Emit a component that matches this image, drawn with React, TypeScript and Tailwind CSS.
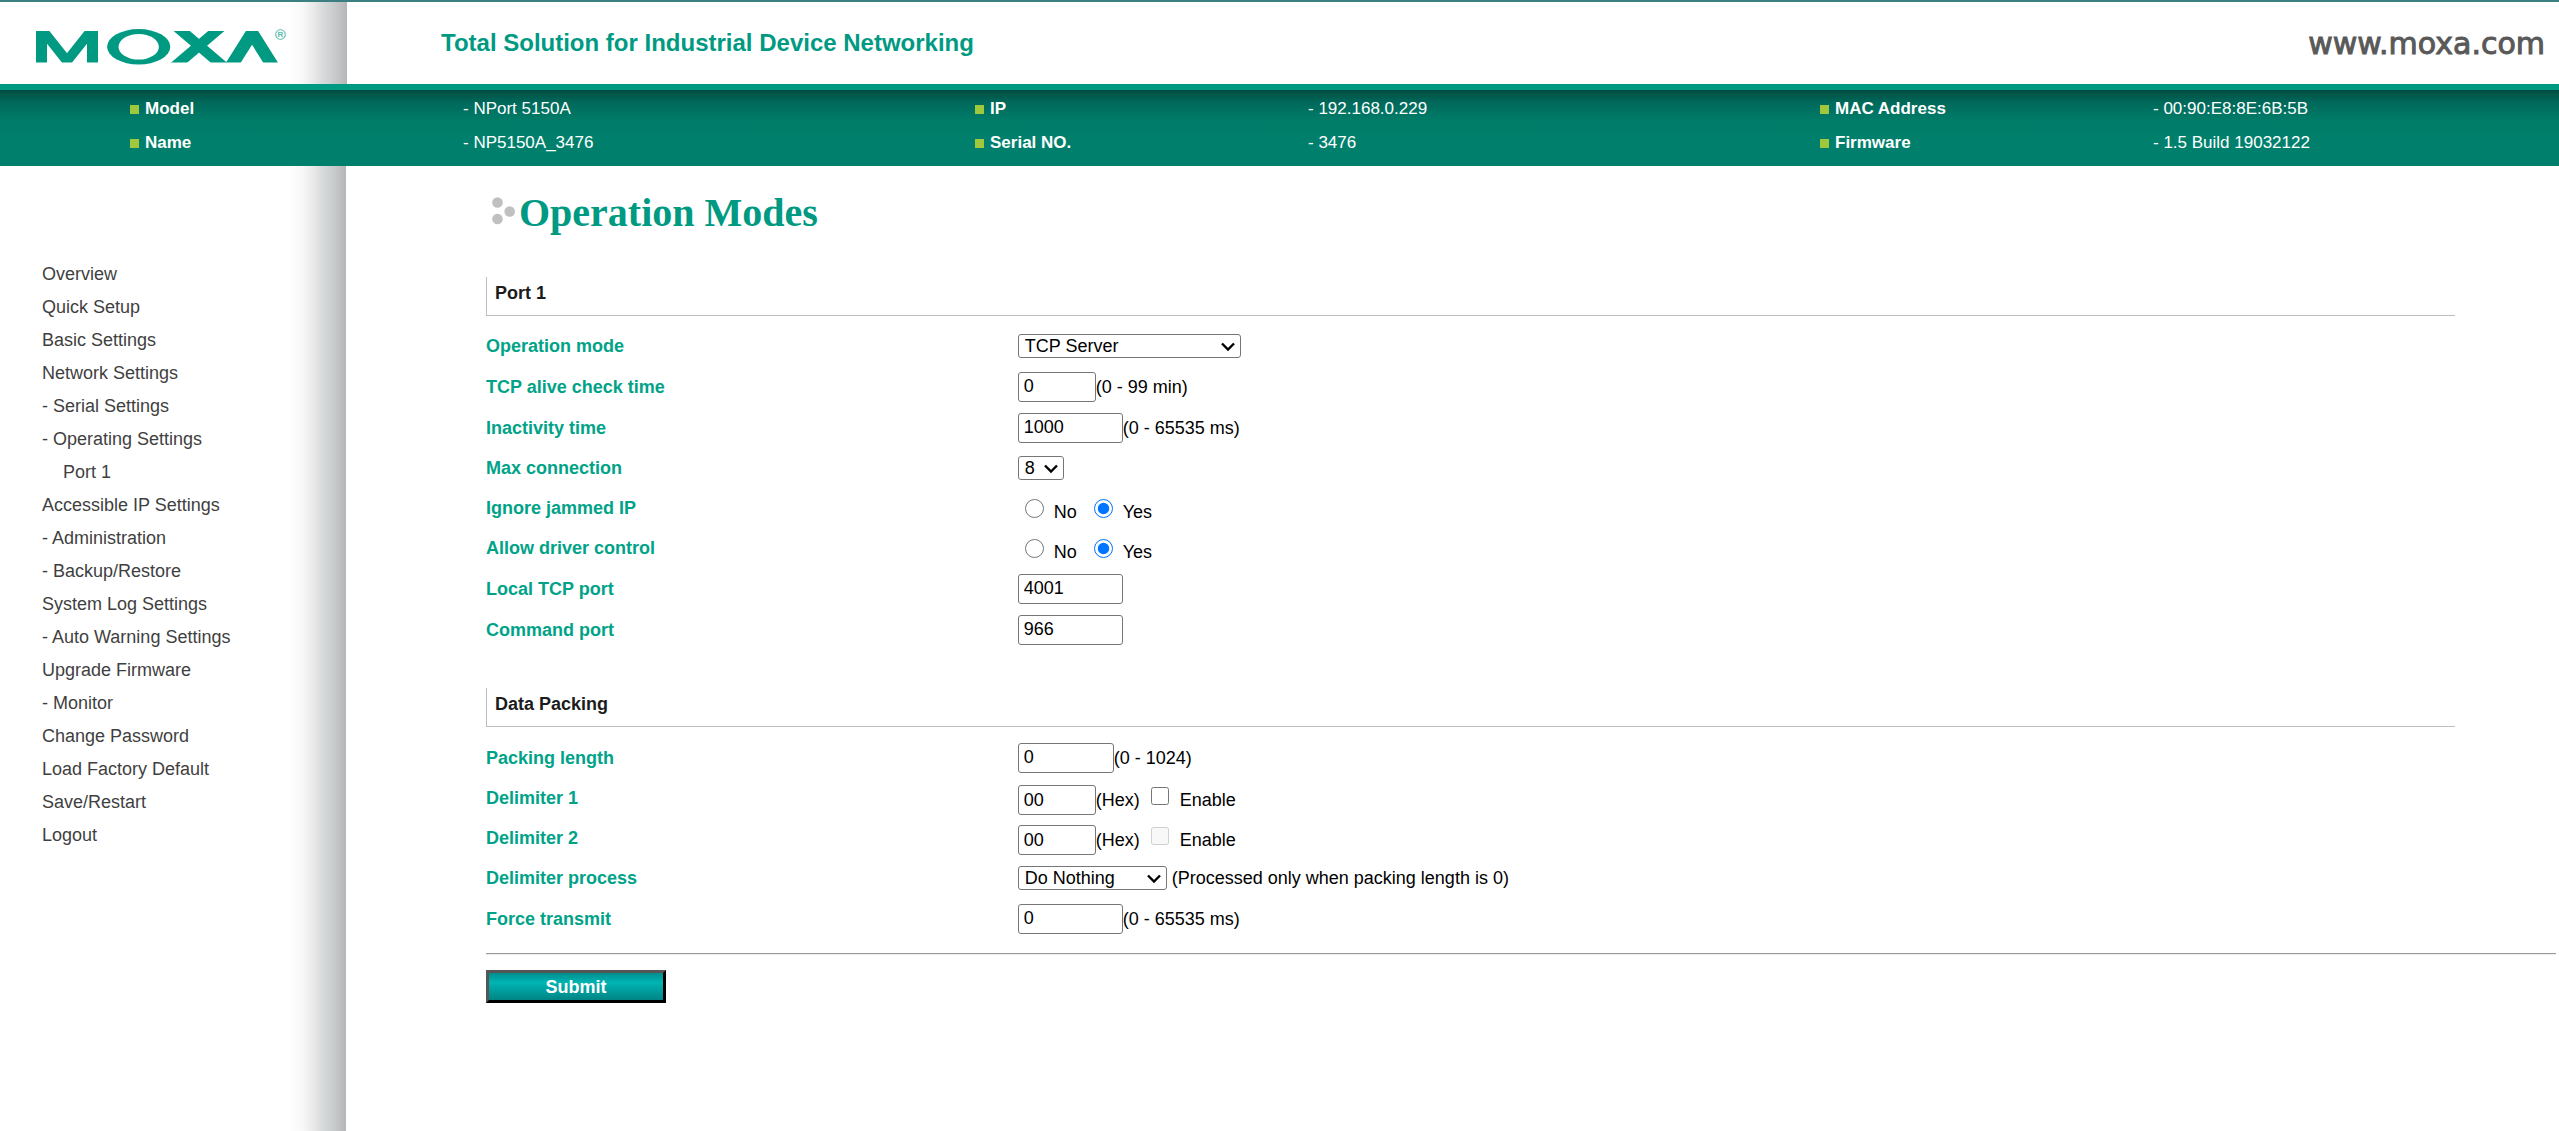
import React, { useId, useState } from "react";

const device = [
  ["Model", "NPort 5150A"],
  ["IP", "192.168.0.229"],
  ["MAC Address", "00:90:E8:8E:6B:5B"],
  ["Name", "NP5150A_3476"],
  ["Serial NO.", "3476"],
  ["Firmware", "1.5 Build 19032122"],
];

const menu = [
  "Overview",
  "Quick Setup",
  "Basic Settings",
  "Network Settings",
  "- Serial Settings",
  "- Operating Settings",
  "Port 1",
  "Accessible IP Settings",
  "- Administration",
  "- Backup/Restore",
  "System Log Settings",
  "- Auto Warning Settings",
  "Upgrade Firmware",
  "- Monitor",
  "Change Password",
  "Load Factory Default",
  "Save/Restart",
  "Logout",
];

const shade =
  "bg-[linear-gradient(to_right,#ffffff,#f8f8f8_25%,#e8e8e8_45%,#d9dcde_57%,#ccced0_75%,#b4b6b8)]";

function Logo() {
  return (
    <svg role="img" aria-label="MOXA" className="ml-9 h-9 w-[252px] shrink-0" viewBox="36 29 252 36">
      <defs>
        <clipPath id="band">
          <rect x="36" y="31" width="250" height="31.5" />
        </clipPath>
      </defs>
      <g clipPath="url(#band)" fill="none" stroke="#009a83" strokeMiterlimit="10">
        <path d="M41.5 66V28M92.5 66V28" strokeWidth="11" />
        <path d="M40 27L67 61L94 27" strokeWidth="9.8" />
        <path d="M177 27L224 67M221 27L174 67" strokeWidth="10.5" />
        <path d="M230 68L252 33L274 68" strokeWidth="12.5" />
      </g>
      <ellipse cx="138.7" cy="46.8" rx="31.6" ry="17.7" fill="#009a83" />
      <ellipse cx="138.7" cy="46.8" rx="20.2" ry="12.8" fill="#ffffff" />
      <circle cx="280.5" cy="34.5" r="4.8" fill="none" stroke="#7cc9bd" strokeWidth="1.3" />
      <text x="280.5" y="37.3" textAnchor="middle" fontSize="8" fontWeight="bold" fontFamily="Liberation Sans, sans-serif" fill="#5cbcae">
        R
      </text>
    </svg>
  );
}

function Row({
  label,
  id,
  height = "h-[41px]",
  children,
}: {
  label: string;
  id?: string;
  height?: string;
  children: React.ReactNode;
}) {
  return (
    <div className={`grid grid-cols-[27%_1fr] items-center ${height}`}>
      {id ? (
        <label htmlFor={id} className="font-bold text-[#00a388]">
          {label}
        </label>
      ) : (
        <span className="font-bold text-[#00a388]">{label}</span>
      )}
      <div className="flex items-center">{children}</div>
    </div>
  );
}

function TextBox({ id, value, width }: { id: string; value: string; width: string }) {
  return (
    <input
      id={id}
      type="text"
      defaultValue={value}
      className={`h-[30px] rounded-[3px] border border-[#767676] bg-white px-[5px] text-black ${width}`}
    />
  );
}

function TextRow({ label, value, width, note }: { label: string; value: string; width: string; note?: string }) {
  const id = useId();
  return (
    <Row label={label} id={id}>
      <TextBox id={id} value={value} width={width} />
      {note && <span>{note}</span>}
    </Row>
  );
}

function SelectRow({
  label,
  options,
  width,
  note,
}: {
  label: string;
  options: string[];
  width: string;
  note?: string;
}) {
  const id = useId();
  return (
    <Row label={label} id={id} height="h-10">
      <div className="relative flex">
        <select
          id={id}
          className={`h-6 appearance-none rounded-[3px] border border-[#767676] bg-white pl-1.5 leading-5 text-black ${width}`}
        >
          {options.map((o) => (
            <option key={o}>{o}</option>
          ))}
        </select>
        <svg className="pointer-events-none absolute top-2 right-1.5 h-2.5 w-3.5" viewBox="0 0 14 10">
          <path d="M1 1.5L7 7.5L13 1.5" fill="none" stroke="#000000" strokeWidth="2.4" />
        </svg>
      </div>
      {note && <span className="ml-[5px]">{note}</span>}
    </Row>
  );
}

function RadioRow({ label }: { label: string }) {
  const name = useId();
  const [value, setValue] = useState("Yes");
  return (
    <Row label={label} height="h-10">
      <div role="radiogroup" aria-label={label} className="flex items-center gap-[17px] pl-[7px]">
        {["No", "Yes"].map((o) => (
          <label key={o} className="flex items-center gap-2.5">
            <input
              type="radio"
              name={name}
              checked={value === o}
              onChange={() => setValue(o)}
              className="size-[19px]"
            />
            <span className="pt-2">{o}</span>
          </label>
        ))}
      </div>
    </Row>
  );
}

function DelimiterRow({ label, disabled }: { label: string; disabled?: boolean }) {
  const id = useId();
  return (
    <Row label={label} id={id} height="h-10">
      <div className="flex items-center pt-1">
        <TextBox id={id} value="00" width="w-[78px]" />
        <span>(Hex)</span>
        <label className="ml-[11px] flex items-center gap-[11px]">
          <input type="checkbox" disabled={disabled} className="mb-2 size-[18px]" />
          <span>Enable</span>
        </label>
      </div>
    </Row>
  );
}

function Caption({ children }: { children: React.ReactNode }) {
  return (
    <h2 className="mb-2.5 flex h-[39px] items-center border-b border-l border-[#bdbdbd] pb-1.5 pl-2 font-bold text-[#1c1c1c]">
      {children}
    </h2>
  );
}

export default function App() {
  return (
    <div className="flex min-h-screen flex-col bg-white font-['Liberation_Sans',Arial,sans-serif] text-[18px] leading-6 text-black">
      <header className="border-t-2 border-[#3b7f83]">
        <div className="flex h-[82px] items-center">
          <div className="flex w-[347px] shrink-0 items-stretch self-stretch">
            <div className="flex items-center pt-2">
              <Logo />
            </div>
            <div className={`flex-1 ${shade}`} />
          </div>
          <p className="flex-1 pl-[94px] text-[24px] font-bold text-[#009a83]">
            Total Solution for Industrial Device Networking
          </p>
          <a
            href="#home"
            className="pt-0.5 pr-3.5 font-['DejaVu_Sans',sans-serif] text-[30px] text-[#595959] [-webkit-text-stroke:1px_#595959]"
          >
            www.moxa.com
          </a>
        </div>
      </header>

      <div className="border-t-6 border-[#009a83] bg-[linear-gradient(to_bottom,#004d40,#00685a_12px,#007c69_30px,#00806c_50px)] px-3 pt-0.5 pb-1.5 text-[17px] text-white">
        <dl className="grid grid-cols-3">
          {device.map(([k, v]) => (
            <div key={k} className="grid h-[34px] grid-cols-[333fr_394fr] items-center pl-[118px]">
              <dt className="flex items-center gap-1.5 font-bold">
                <span className="size-[9px] bg-[#a0c83c]" />
                {k}
              </dt>
              <dd>- {v}</dd>
            </div>
          ))}
        </dl>
      </div>

      <div className="flex flex-1">
        <aside className="flex w-[346px] shrink-0">
          <nav className="flex-1 pt-[92px] pl-[42px] text-[#3f3f3f]">
            <ul>
              {menu.map((m) => (
                <li key={m} className={m === "Port 1" ? "h-[33px] pl-[21px] leading-[33px]" : "h-[33px] leading-[33px]"}>
                  <a href={`#${m}`}>{m}</a>
                </li>
              ))}
            </ul>
          </nav>
          <div className={`w-[58px] ${shade}`} />
        </aside>

        <main className="min-w-0 flex-1 pt-6 pl-[140px]">
          <h1 className="flex items-center gap-[3px] pl-1.5 font-['Liberation_Serif',serif] text-[40px] leading-[46px] font-bold text-[#009a83]">
            <svg className="mb-1 h-7 w-6 shrink-0" viewBox="0 0 24 28" fill="#c0c0c0">
              <circle cx="5.5" cy="5.5" r="5.3" />
              <circle cx="17.7" cy="14.5" r="5.3" />
              <circle cx="5.5" cy="22" r="5.3" />
            </svg>
            Operation Modes
          </h1>

          <form onSubmit={(e) => e.preventDefault()}>
            <section className="w-[95%] pt-[41px]">
              <Caption>Port 1</Caption>
              <SelectRow label="Operation mode" options={["TCP Server", "Real COM", "UDP", "Disable"]} width="w-[223px]" />
              <TextRow label="TCP alive check time" value="0" width="w-[78px]" note="(0 - 99 min)" />
              <TextRow label="Inactivity time" value="1000" width="w-[105px]" note="(0 - 65535 ms)" />
              <SelectRow label="Max connection" options={["8", "4", "2", "1"]} width="w-[46px]" />
              <RadioRow label="Ignore jammed IP" />
              <RadioRow label="Allow driver control" />
              <TextRow label="Local TCP port" value="4001" width="w-[105px]" />
              <TextRow label="Command port" value="966" width="w-[105px]" />
            </section>

            <section className="w-[95%] pt-[38px]">
              <Caption>Data Packing</Caption>
              <TextRow label="Packing length" value="0" width="w-24" note="(0 - 1024)" />
              <DelimiterRow label="Delimiter 1" />
              <DelimiterRow label="Delimiter 2" disabled />
              <SelectRow
                label="Delimiter process"
                options={["Do Nothing", "Delimiter + 1", "Strip Delimiter"]}
                width="w-[149px]"
                note="(Processed only when packing length is 0)"
              />
              <TextRow label="Force transmit" value="0" width="w-[105px]" note="(0 - 65535 ms)" />
            </section>

            <hr className="mt-3.5 mr-[3px] mb-[15px] h-0.5 border-t border-b border-t-[#9a9a9a] border-b-[#eeeeee]" />
            <button
              type="submit"
              className="block h-[33px] w-[180px] border-3 border-t-[#555555] border-r-black border-b-black border-l-[#555555] bg-[linear-gradient(to_bottom,#008c8c,#00b4b4_35%,#008484)] leading-[26px] font-bold text-white"
            >
              Submit
            </button>
          </form>
        </main>
      </div>
    </div>
  );
}
